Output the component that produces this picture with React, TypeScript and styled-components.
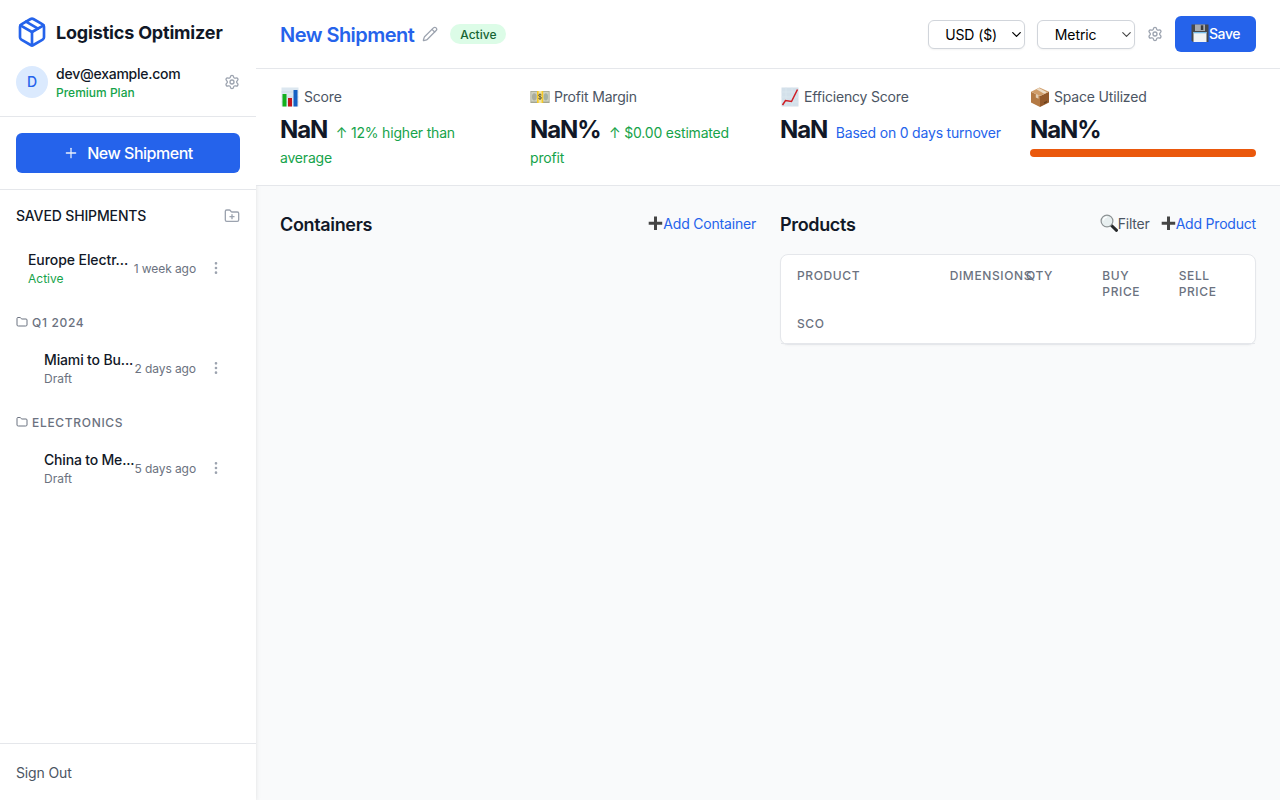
import React from 'react';
import styled, { createGlobalStyle } from 'styled-components';
import { Settings, FolderPlus, Folder, Pencil, Plus, EllipsisVertical, ChevronDown, Package } from 'lucide-react';

const c = {
  blue: '#2563eb', green: '#16a34a', ink: '#111827', g600: '#4b5563', g500: '#6b7280', g400: '#9ca3af', line: '#e5e7eb',
};

const Global = createGlobalStyle`
  *, *::before, *::after { box-sizing: border-box; }
  body { margin: 0; font-family: Inter, 'Liberation Sans', sans-serif; font-size: 16px; line-height: 24px; color: ${c.ink}; }
  h1, h2, p { margin: 0; }
  button { font: inherit; border: 0; padding: 0; background: none; color: inherit; }
  svg { display: block; flex: none; }
`;

const Page = styled.div`display: flex; height: 800px; overflow: hidden; background: #f9fafb;`;
const Sidebar = styled.aside`
  width: 256px; flex: none; display: flex; flex-direction: column; background: #fff;
  box-shadow: 0 4px 6px -1px rgba(0,0,0,.1), 0 2px 4px -2px rgba(0,0,0,.1);
`;
const Brand = styled.div`padding: 16px; border-bottom: 1px solid ${c.line};`;
const BrandRow = styled.div`display: flex; align-items: center; gap: 8px; margin-bottom: 16px;`;
const BrandName = styled.h1`font-size: 18px; font-weight: 700; line-height: 28px; letter-spacing: -.18px; padding-top: 2px;`;
const UserRow = styled.div`display: flex; align-items: center; gap: 8px; color: ${c.g400};`;
const Avatar = styled.div`
  width: 32px; height: 32px; border-radius: 50%; background: #dbeafe; color: ${c.blue};
  display: flex; align-items: center; justify-content: center; font-size: 14px; font-weight: 500;
`;
const UserInfo = styled.div`flex: 1;`;
const Name = styled.p<{ $track?: number }>`
  font-size: 14px; line-height: 20px; font-weight: 500; letter-spacing: ${p => p.$track ?? -0.24}px; color: ${c.ink}; white-space: nowrap;
`;
const Small = styled.p<{ $color: string; $medium?: boolean }>`
  font-size: 12px; line-height: 16px; padding-top: 1px; margin-bottom: -1px;
  color: ${p => p.$color}; font-weight: ${p => (p.$medium ? 500 : 400)};
`;
const NewWrap = styled.div`padding: 16px; border-bottom: 1px solid ${c.line};`;
const NewButton = styled.button`
  display: flex; width: 100%; height: 40px; align-items: center; justify-content: center; gap: 8px;
  border-radius: 6px; background: ${c.blue}; color: #fff; font-weight: 500; letter-spacing: -.48px;
  svg { opacity: .9; }
`;
const List = styled.div`flex: 1; padding: 16px;`;
const ListHead = styled.div`
  display: flex; justify-content: space-between; align-items: center; color: ${c.g400}; margin-bottom: 16px;
`;
const ListTitle = styled.h2`
  font-size: 14px; line-height: 20px; font-weight: 500; letter-spacing: -.14px; color: ${c.ink};
`;
const Group = styled.div`
  display: flex; align-items: center; gap: 4px; margin: 20px 0 12px; color: ${c.g500};
  font-size: 12px; line-height: 16px; font-weight: 500; letter-spacing: .68px;
  span { padding-top: 1px; margin-bottom: -1px; }
`;
const Item = styled.div<{ $nested?: boolean }>`
  display: flex; align-items: center; padding: 8px 12px; margin-left: ${p => (p.$nested ? 16 : 0)}px;
`;
const ItemText = styled.div`flex: 1; min-width: 0;`;
const Time = styled.span`
  font-size: 12px; line-height: 16px; padding-top: 2px; letter-spacing: -.08px; color: ${c.g500}; white-space: nowrap;
`;
const Dots = styled.button`display: flex; margin-left: 8px; padding: 4px; color: ${c.g400};`;
const SignOut = styled.div`
  height: 57px; border-top: 1px solid ${c.line}; padding: 2px 16px 0; display: flex; align-items: center;
  font-size: 14px; letter-spacing: -.14px; color: ${c.g600};
`;

const Main = styled.main`flex: 1; min-width: 0;`;
const TopBar = styled.header`
  position: relative; height: 69px; padding: 0 24px; display: flex; align-items: center; justify-content: space-between;
  background: #fff; border-bottom: 1px solid ${c.line};
`;
const TitleGroup = styled.div`display: flex; align-items: center; color: ${c.g400};`;
const Title = styled.h1`
  font-size: 20px; line-height: 28px; font-weight: 600; letter-spacing: -.53px; color: ${c.blue}; margin-right: 8px; padding-top: 2px;
`;
const Badge = styled.span`
  margin-left: 12px; padding: 3px 10px 1px; border-radius: 10px; background: #dcfce7; color: #166534;
  font-size: 12px; line-height: 16px; font-weight: 500;
`;
const Controls = styled.div`display: flex; align-items: center; gap: 12px; color: ${c.g400};`;
const Select = styled.button<{ $chevron: string }>`
  display: flex; align-items: center; justify-content: space-between; width: 97.700px; height: 29px;
  padding: 2px 0 0 16.500px; border: 1px solid #d1d5db; border-radius: 6px; background: #fff; box-shadow: 0 1px 2px rgba(0,0,0,.05);
  font-size: 14px; letter-spacing: -.1px; color: #000;
  svg { color: ${p => p.$chevron}; margin-top: -2px; }
`;
const Save = styled.button`
  display: flex; align-items: center; height: 36px; width: 81px; justify-content: center; border-radius: 6px;
  background: ${c.blue}; color: #fff; font-size: 14px; font-weight: 500; letter-spacing: -.4px;
`;
const Stats = styled.section`
  position: relative; height: 117px; padding: 16px 24px; display: grid; grid-template-columns: repeat(4, 1fr); gap: 24px;
  background: #fff; border-bottom: 1px solid ${c.line}; line-height: 22px;
`;
const StatLabel = styled.div`
  display: flex; align-items: center; height: 24px; gap: 4px; margin-bottom: 5px; font-size: 14px; letter-spacing: -.18px; color: ${c.g600};
`;
const Value = styled.span`font-size: 24px; line-height: 32px; font-weight: 700; letter-spacing: -1.100px;`;
const Note = styled.span<{ $color: string }>`
  font-size: 14px; line-height: 20px; letter-spacing: -.190px; margin-left: 8.500px; color: ${p => p.$color};
`;
const Bar = styled.div`height: 8px; margin-top: 3px; border-radius: 4px; background: #ea580c;`;
const Columns = styled.section`display: grid; grid-template-columns: 1fr 1fr; gap: 24px; padding: 24px;`;
const ColHead = styled.div`display: flex; justify-content: space-between; align-items: center; height: 28px; margin-bottom: 16px;`;
const ColTitle = styled.h2`font-size: 18px; line-height: 28px; font-weight: 600; letter-spacing: -.34px; padding-top: 2px;`;
const Actions = styled.div`display: flex; gap: 11px;`;
const Action = styled.button<{ $color: string }>`
  display: flex; align-items: center; font-size: 14px; line-height: 20px; letter-spacing: -.2px; color: ${p => p.$color};
`;
const Card = styled.div`
  border: 1px solid ${c.line}; border-radius: 8px; background: #fff; box-shadow: 0 1px 2px rgba(0,0,0,.03);
`;
const TableHead = styled.div`
  display: grid; grid-template-columns: repeat(12, minmax(0, 1fr)); gap: 16px; padding: 13px 16px 11px;
  border-bottom: 1px solid ${c.line}; color: ${c.g500};
  font-size: 12px; line-height: 16px; font-weight: 500; letter-spacing: .62px;
`;
const Th = styled.div<{ $span: number }>`grid-column: span ${p => p.$span};`;

const ChartBars = () => (
  <svg width="20" height="20" viewBox="0 0 20 20">
    <rect x="1.5" y=".5" width="17" height="19" fill="#dce7f0" />
    <path d="M1.5 5h17M1.5 10h17M1.5 15h17" stroke="#c7d5e0" strokeWidth=".6" />
    <rect x="2.5" y="7" width="4" height="12.5" fill="#12b01d" />
    <rect x="8" y="11" width="4" height="8.5" fill="#c4161c" />
    <rect x="13.5" y="3" width="4" height="16.5" fill="#1460c4" />
  </svg>
);
const Money = () => (
  <svg width="20" height="20" viewBox="0 0 20 20">
    <rect x=".4" y="4" width="19.2" height="12" fill="#a3a58f" />
    <rect x="1.2" y="4.8" width="17.6" height="9.8" fill="#cfd1c0" />
    <ellipse cx="4.3" cy="9.8" rx="2.4" ry="3.6" fill="#aaad9e" />
    <ellipse cx="15.8" cy="9.8" rx="2.2" ry="3.6" fill="#a3b0a2" />
    <rect x="7" y="4" width="6.2" height="12" fill="#f6c928" />
    <rect x="8.6" y="4" width="3" height="12" fill="#f2e6a4" />
    <path d="M11.5 8c-.6-1-3-.9-3 .4 0 1.4 3 1 3 2.5 0 1.4-2.5 1.4-3.2.3M10 6.600v6.200" fill="none" stroke="#5b5632" strokeWidth=".9" />
  </svg>
);
const ChartLine = () => (
  <svg width="20" height="20" viewBox="0 0 20 20">
    <rect x="1.5" y=".5" width="17" height="19" fill="#d3e0ea" />
    <path d="M1.5 5h17M1.5 10h17M1.5 15h17M6 .5v19M12 .5v19" stroke="#dde8f0" strokeWidth=".7" />
    <path d="m2.5 18 3-4.500 6 1L17.500 2.500" fill="none" stroke="#cf1d24" strokeWidth="1.5" />
  </svg>
);
const Parcel = () => (
  <svg width="20" height="20" viewBox="0 0 20 20">
    <path d="M1 4.800 10 9v11l-9-4.600z" fill="#b47a44" />
    <path d="M19 4.800 10 9v11l9-4.600z" fill="#93592b" />
    <path d="M1 4.800 9.500.500 19 4.800 10 9z" fill="#cf9c68" />
    <path d="m6.400 2.300 2.600-1.200 8 4.100-2.800 1.500z" fill="#eddcc6" />
    <path d="m5.800 7 2.700 1.300v3.500l-2.700-1.300z" fill="#e3ceb3" />
    <path d="m14 15.200 3-1.500v1.500l-3 1.500z" fill="#66401d" />
  </svg>
);
const Floppy = () => (
  <svg width="18" height="20" viewBox="0 0 18 20">
    <path d="M.5.500h17v17.500H2L.5 16.500z" fill="#47484b" />
    <path d="M4 .5h10v6.500H4z" fill="#a8abb0" />
    <path d="M9.800 1.300h2.500v4.700H9.800z" fill="#393a3d" />
    <path d="M2.500 8h13v10h-13z" fill="#f1f3f5" />
    <path d="M2.500 8h13v1.300h-13z" fill="#77bdea" />
  </svg>
);
const PlusMark = () => (
  <svg width="15" height="18" viewBox="0 0 15 18">
    <path d="M6 1.500h3v5.300h5.200v3H9V15H6V9.800H.7v-3H6z" fill="#454545" />
  </svg>
);
const Magnifier = () => (
  <svg width="18" height="20" viewBox="0 0 18 20">
    <path d="m11.500 11.500 5 4.800" stroke="#27292b" strokeWidth="3" strokeLinecap="round" />
    <circle cx="7" cy="7" r="5.900" fill="#e8eff0" stroke="#8d9294" strokeWidth="1.200" />
    <path d="M3.500 6.500A3.500 3.500 0 0 1 7 3.200" stroke="#fff" strokeWidth="1.300" fill="none" />
  </svg>
);

interface ShipmentProps { name: string; status: string; time: string; track: number; nested?: boolean }
const Shipment = ({ name, status, time, track, nested }: ShipmentProps) => (
  <Item $nested={nested}>
    <ItemText>
      <Name $track={track}>{name}</Name>
      <Small $color={status === 'Active' ? c.green : c.g500}>{status}</Small>
    </ItemText>
    <Time>{time}</Time>
    <Dots><EllipsisVertical size={16} /></Dots>
  </Item>
);

export default function App() {
  return (
    <Page>
      <Global />
      <Sidebar>
        <Brand>
          <BrandRow><Package size={32} color={c.blue} /><BrandName>Logistics Optimizer</BrandName></BrandRow>
          <UserRow>
            <Avatar>D</Avatar>
            <UserInfo><Name>dev@example.com</Name><Small $color={c.green} $medium>Premium Plan</Small></UserInfo>
            <Settings size={16} />
          </UserRow>
        </Brand>
        <NewWrap><NewButton><Plus size={16} strokeWidth={1.9} />New Shipment</NewButton></NewWrap>
        <List>
          <ListHead><ListTitle>SAVED SHIPMENTS</ListTitle><FolderPlus size={16} /></ListHead>
          <Shipment name="Europe Electr..." status="Active" time="1 week ago" track={-0.08} />
          <Group><Folder size={12} /><span>Q1 2024</span></Group>
          <Shipment nested name="Miami to Bu..." status="Draft" time="2 days ago" track={-0.14} />
          <Group><Folder size={12} /><span>ELECTRONICS</span></Group>
          <Shipment nested name="China to Me..." status="Draft" time="5 days ago" track={-0.18} />
        </List>
        <SignOut>Sign Out</SignOut>
      </Sidebar>
      <Main>
        <TopBar>
          <TitleGroup><Title>New Shipment</Title><Pencil size={16} strokeWidth={1.9} /><Badge>Active</Badge></TitleGroup>
          <Controls>
            <Select $chevron="#000">USD ($)<ChevronDown size={15} strokeWidth={2.1} /></Select>
            <Select $chevron="#444">Metric<ChevronDown size={15} strokeWidth={1.8} /></Select>
            <Settings size={16} />
            <Save><Floppy />Save</Save>
          </Controls>
        </TopBar>
        <Stats>
          <div><StatLabel><ChartBars />Score</StatLabel><Value>NaN</Value><Note $color={c.green}>↑ 12% higher than average</Note></div>
          <div><StatLabel><Money />Profit Margin</StatLabel><Value>NaN%</Value><Note $color={c.green}>↑ $0.00 estimated profit</Note></div>
          <div><StatLabel><ChartLine />Efficiency Score</StatLabel><Value>NaN</Value><Note $color={c.blue}>Based on 0 days turnover</Note></div>
          <div><StatLabel><Parcel />Space Utilized</StatLabel><Value>NaN%</Value><Bar /></div>
        </Stats>
        <Columns>
          <div>
            <ColHead><ColTitle>Containers</ColTitle><Action $color={c.blue}><PlusMark />Add Container</Action></ColHead>
          </div>
          <div>
            <ColHead>
              <ColTitle>Products</ColTitle>
              <Actions>
                <Action $color={c.g600}><Magnifier />Filter</Action>
                <Action $color={c.blue}><PlusMark />Add Product</Action>
              </Actions>
            </ColHead>
            <Card>
              <TableHead>
                <Th $span={4}>PRODUCT</Th><Th $span={2}>DIMENSIONS</Th><Th $span={2}>QTY</Th>
                <Th $span={2}>BUY PRICE</Th><Th $span={2}>SELL PRICE</Th><Th $span={1}>SCO</Th>
              </TableHead>
            </Card>
          </div>
        </Columns>
      </Main>
    </Page>
  );
}
